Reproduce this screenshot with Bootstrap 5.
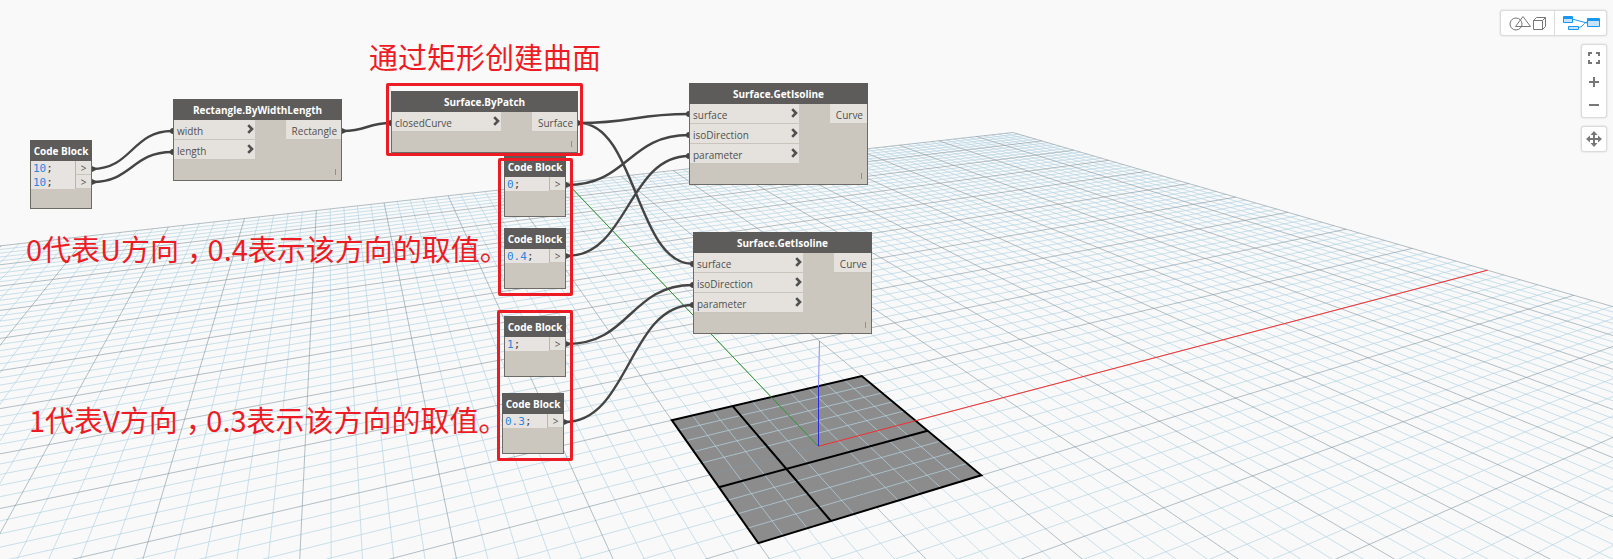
<!DOCTYPE html>
<html lang="zh-CN">
<head>
<meta charset="utf-8">
<meta name="viewport" content="width=device-width, initial-scale=1">
<title>Dynamo - Surface.GetIsoline</title>
<link href="https://cdn.jsdelivr.net/npm/bootstrap@5.3.0/dist/css/bootstrap.min.css" rel="stylesheet">
<style>
  body { background: #f9f9f9; font-family: "Open Sans", "Noto Sans", sans-serif; }
  .workspace { min-height: 100vh; }
  .scene, .wires { left: 0; top: 0; width: 100%; height: 100%; pointer-events: none; }
  .minor { stroke: #b5d4e4; stroke-opacity: .7; }
  .major { stroke: #8296a2; stroke-opacity: .6; }

  /* graph nodes */
  .node { position: absolute; width: 179px; background: #cbc6be; border: 1px solid #6e6b67; border-top: 0; font-size: 10px; line-height: 20px; color: #505050; }
  .node h2 { margin: 0 -1px; height: 21px; background: #5e5c5a; color: #fff; font-size: 10px; font-weight: 700; line-height: 23px; text-align: center; white-space: nowrap; }
  .ports-in { width: 109px; }
  .port { height: 20px; padding: 0 1px 0 3px; background: #e5e2dd; border-bottom: 1px solid #c9c4bc; line-height: 22px; }
  .port svg { width: 7px; height: 10px; }
  .port-out { padding: 0 4px 0 6px; }
  .node footer { height: 20px; padding: 9px 5px 0; }
  .lacing { width: 1px; height: 6px; background: #8f8f95; }
  .n-rect { width: 169px; }
  .n-rect .ports-in { width: 81px; }
  .n-patch { width: 187px; }
  .code-node { width: 62px; }
  .code-node footer { height: 25px; }
  .code-node .footer-short { height: 19px; }
  .code-row { height: 14px; line-height: 14px; background: #e7e3e0; }
  .code-row code { padding-left: 2px; font: 11px/15px "DejaVu Sans Mono", monospace; color: #444; }
  .code-row b { font-weight: 400; color: #2a86e0; }
  .out { width: 16px; border-left: 1px solid #b9b4ae; border-bottom: 1px solid #c9c4bc; text-align: center; background: #e5e2dd; }

  /* red annotations */
  .frame { position: absolute; border: 3px solid #ed1c24; border-radius: 2px; }
  .note { position: absolute; margin: 0; color: #ed1c24; font: 400 29px/40px "Noto Sans CJK SC", sans-serif; white-space: nowrap; }
  .half { font-feature-settings: "halt"; }
  .comma { padding: 0 6px 0 8px; }

  /* view controls */
  .tools { padding: 10px 6px; gap: 8px; }
  .panel { background: #fff; border: 1px solid #dcdcdc; border-radius: 3px; box-shadow: 0 0 2px #ccc; }
  .panel button { display: block; padding: 0; border: 0; background: none; height: 24px; width: 24px; line-height: 0; }
  .panel button svg { display: block; margin: auto; }
  .panel .mode { width: 53px; height: 24px; }
  .panel .mode + .mode { width: 52px; border-left: 1px solid #dcdcdc; }
</style>
</head>
<body>
<main class="workspace position-relative overflow-hidden">
  <svg class="scene position-absolute" id="scene" aria-hidden="true"></svg>

  <svg class="wires position-absolute" fill="none" stroke="#444" stroke-width="2.400" aria-hidden="true">
    <path d="M92 169C132 169 132 131 172 131M92 182C132 182 132 152 172 152M343 131C367 131 367 123 391 123M579 123C634 123 634 114 689 114M579 123C636 123 636 264 693 264M567 185C628 185 628 135 689 135M567 256C628 256 628 156 689 156M567 344C630 344 630 285 693 285M565 422C629 422 629 305 693 305"/>
    <g fill="#444" stroke="none">
      <path d="M92 166l4 2v2l-4 2zM92 179l4 2v2l-4 2zM342 128l4 2v2l-4 2zM578 120l4 2v2l-4 2zM566 182l4 2v2l-4 2zM566 253l4 2v2l-4 2zM566 341l4 2v2l-4 2zM564 419l4 2v2l-4 2z"/>
      <circle cx="173" cy="131" r="3"/><circle cx="173" cy="152" r="3"/><circle cx="391" cy="123" r="3"/>
      <circle cx="689" cy="114" r="3"/><circle cx="689" cy="135" r="3"/><circle cx="689" cy="156" r="3"/>
      <circle cx="693" cy="264" r="3"/><circle cx="693" cy="285" r="3"/><circle cx="693" cy="305" r="3"/>
    </g>
  </svg>

  <svg class="d-none"><symbol id="chev" viewBox="0 0 7 10"><path d="M1.200 1.200L5 5L1.200 8.800" fill="none" stroke="#505050" stroke-width="2.600"/></symbol></svg>

  <section class="node code-node" style="left:30px;top:140px">
    <h2>Code Block</h2>
    <div class="code-row d-flex justify-content-between"><code><b>10</b>;</code><span class="out">&gt;</span></div>
    <div class="code-row d-flex justify-content-between"><code><b>10</b>;</code><span class="out">&gt;</span></div>
    <footer class="footer-short"></footer>
  </section>

  <section class="node n-rect" style="left:173px;top:99px">
    <h2>Rectangle.ByWidthLength</h2>
    <div class="d-flex justify-content-between align-items-start">
      <div class="ports-in">
        <div class="port d-flex justify-content-between"><span>width</span><svg class="mt-1"><use href="#chev"/></svg></div>
        <div class="port d-flex justify-content-between"><span>length</span><svg class="mt-1"><use href="#chev"/></svg></div>
      </div>
      <div class="port port-out">Rectangle</div>
    </div>
    <footer class="d-flex justify-content-end"><span class="lacing"></span></footer>
  </section>

  <section class="node n-patch" style="left:391px;top:91px">
    <h2>Surface.ByPatch</h2>
    <div class="d-flex justify-content-between align-items-start">
      <div class="ports-in">
        <div class="port d-flex justify-content-between"><span>closedCurve</span><svg class="mt-1"><use href="#chev"/></svg></div>
      </div>
      <div class="port port-out">Surface</div>
    </div>
    <footer class="d-flex justify-content-end"><span class="lacing"></span></footer>
  </section>

  <section class="node code-node" style="left:504px;top:156px">
    <h2>Code Block</h2>
    <div class="code-row d-flex justify-content-between"><code><b>0</b>;</code><span class="out">&gt;</span></div>
    <footer></footer>
  </section>
  <section class="node code-node" style="left:504px;top:228px">
    <h2>Code Block</h2>
    <div class="code-row d-flex justify-content-between"><code><b>0.4</b>;</code><span class="out">&gt;</span></div>
    <footer></footer>
  </section>
  <section class="node code-node" style="left:504px;top:316px">
    <h2>Code Block</h2>
    <div class="code-row d-flex justify-content-between"><code><b>1</b>;</code><span class="out">&gt;</span></div>
    <footer></footer>
  </section>
  <section class="node code-node" style="left:502px;top:393px">
    <h2>Code Block</h2>
    <div class="code-row d-flex justify-content-between"><code><b>0.3</b>;</code><span class="out">&gt;</span></div>
    <footer></footer>
  </section>

  <section class="node" style="left:689px;top:83px">
    <h2>Surface.GetIsoline</h2>
    <div class="d-flex justify-content-between align-items-start">
      <div class="ports-in">
        <div class="port d-flex justify-content-between"><span>surface</span><svg class="mt-1"><use href="#chev"/></svg></div>
        <div class="port d-flex justify-content-between"><span>isoDirection</span><svg class="mt-1"><use href="#chev"/></svg></div>
        <div class="port d-flex justify-content-between"><span>parameter</span><svg class="mt-1"><use href="#chev"/></svg></div>
      </div>
      <div class="port port-out">Curve</div>
    </div>
    <footer class="d-flex justify-content-end"><span class="lacing"></span></footer>
  </section>
  <section class="node" style="left:693px;top:232px">
    <h2>Surface.GetIsoline</h2>
    <div class="d-flex justify-content-between align-items-start">
      <div class="ports-in">
        <div class="port d-flex justify-content-between"><span>surface</span><svg class="mt-1"><use href="#chev"/></svg></div>
        <div class="port d-flex justify-content-between"><span>isoDirection</span><svg class="mt-1"><use href="#chev"/></svg></div>
        <div class="port d-flex justify-content-between"><span>parameter</span><svg class="mt-1"><use href="#chev"/></svg></div>
      </div>
      <div class="port port-out">Curve</div>
    </div>
    <footer class="d-flex justify-content-end"><span class="lacing"></span></footer>
  </section>

  <div class="frame" style="left:386px;top:83px;width:197px;height:73px"></div>
  <div class="frame" style="left:498px;top:158px;width:75px;height:138px"></div>
  <div class="frame" style="left:497px;top:310px;width:76px;height:151px"></div>

  <p class="note" style="left:369px;top:36px">通过矩形创建曲面</p>
  <p class="note" style="left:26px;top:228px">0代表U方向<span class="half comma">，</span>0.4表示该方向的取值<span class="half">。</span></p>
  <p class="note" style="left:29px;top:399px">1代表V方向<span class="half comma">，</span>0.3表示该方向的取值<span class="half">。</span></p>

  <div class="tools position-relative d-flex flex-column align-items-end">
    <div class="panel d-flex">
      <button class="mode" type="button" aria-label="3D view">
        <svg width="38" height="16" fill="none" stroke="#777"><circle cx="7" cy="9" r="6"/><path d="M14 1.500L21.500 11.500H6.500zM24.500 5.500h9v9h-9zM24.500 5.500l3-3h9v9l-3 3M33.500 5.500l3-3"/></svg>
      </button>
      <button class="mode" type="button" aria-label="Graph view">
        <svg width="38" height="16" fill="#c5e4fa" stroke="#1a97f0"><path d="M10 4L25 8M16 12.500C21 12.500 21 8 25 7" fill="none"/><path d="M1.500 1.500h9v6h-9zM6.500 11.500h10v3h-10zM25.500 3.500h12v8h-12z"/><path d="M1 3h10M25 5h13" stroke-width="2"/></svg>
      </button>
    </div>
    <div class="panel">
      <button type="button" aria-label="Fit view"><svg width="24" height="24" fill="none" stroke="#777" stroke-width="2"><path d="M7 11V8h3M14 8h3v3M17 15v3h-3M10 18H7v-3"/></svg></button>
      <button type="button" aria-label="Zoom in"><svg width="24" height="24" stroke="#777" stroke-width="2"><path d="M7 13h10M12 8v10"/></svg></button>
      <button type="button" aria-label="Zoom out"><svg width="24" height="24" stroke="#777" stroke-width="2"><path d="M7 12h10"/></svg></button>
    </div>
    <div class="panel">
      <button type="button" aria-label="Pan"><svg width="24" height="24" fill="#777"><path d="M12 4l3.500 4H13v3h3V8.500l4 3.500-4 3.500V13h-3v3h2.500L12 20l-3.500-4H11v-3H8v2.500L4 12l4-3.500V11h3V8H8.500z"/></svg></button>
    </div>
  </div>
</main>

<script src="https://cdn.jsdelivr.net/npm/bootstrap@5.3.0/dist/js/bootstrap.bundle.min.js"></script>
<script>
  // Perspective camera: ground-plane coordinates to screen.
  const w = (x, y) => 1 + 0.0106 * x + 0.02125 * y;
  const point = (x, y) => [
    ((818.3 + 29.15 * x + 7 * y) / w(x, y)).toFixed(1),
    ((446.3 - 0.658 * x - 1.4 * y) / w(x, y)).toFixed(1)
  ].join(' ');
  const NEAR = 0.3, SIZE = 50;

  // Segment cut at the near plane so that it never passes behind the camera.
  function segment(x1, y1, x2, y2) {
    const a = w(x1, y1), b = w(x2, y2);
    if (b < NEAR) return '';
    if (a < NEAR) {
      const t = (NEAR - a) / (b - a);
      x1 += (x2 - x1) * t;
      y1 += (y2 - y1) * t;
    }
    return 'M' + point(x1, y1) + 'L' + point(x2, y2);
  }

  let minor = '', major = '';
  for (let i = -SIZE; i <= SIZE; i++) {
    const lines = segment(i, -SIZE, i, SIZE) + segment(-SIZE, i, SIZE, i);
    if (i % 5) minor += lines; else major += lines;
  }
  const outline = [[-5, 5], [5, 5], [5, -5], [-5, -5]].map(p => point(...p)).join('L');

  document.getElementById('scene').innerHTML = `
    <g fill="none">
      <path d="M${outline}Z" fill="#8c8c8c"/>
      <path class="minor" d="${minor}"/>
      <path class="major" d="${major}"/>
      <path d="M${outline}Z${segment(-2, -5, -2, 5)}${segment(-5, -1, 5, -1)}" stroke="#000" stroke-width="2"/>
      <path d="${segment(0, 0, SIZE, 0)}" stroke="#f22" stroke-opacity=".9"/>
      <path d="${segment(0, 0, 0, SIZE)}" stroke="#2f962f"/>
      <path d="M818.500 446V386" stroke="#2a2ae0"/>
      <path d="M818.500 386L819.500 341" stroke="#8a8af5"/>
    </g>`;
</script>
</body>
</html>
